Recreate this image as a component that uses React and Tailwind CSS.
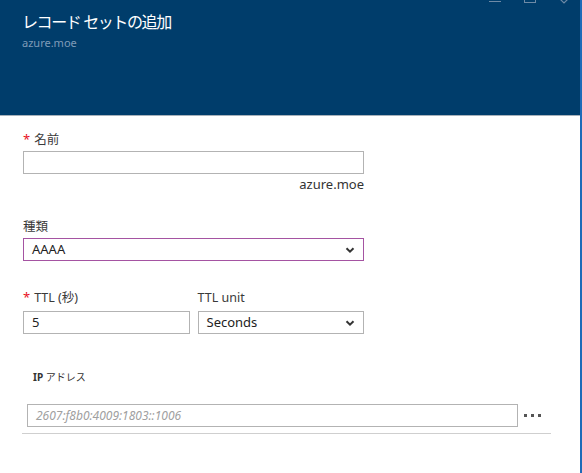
import React from 'react';

const font = {fontFamily: '"Noto Sans", "Noto Sans CJK JP", sans-serif'};

const Chevron = () => (
    <svg className="h-[10px] w-[10px]" viewBox="0 0 10 10" fill="none" stroke="#333" strokeWidth={2}>
        <path d="M1.5 3.2 5 6.6 8.5 3.2"/>
    </svg>
);

const Label = ({required, children, gap = 'mb-[3px]'}) => (
    <div className={`flex items-center gap-[4px] text-[12.5px] leading-[16px] text-[#3a3a3a] ${gap}`}>
        {required && <span className="text-[#e81123] text-[13px] -mt-[3px]">*</span>}
        <span>{children}</span>
    </div>
);

const App = () => {
    return (
        <div className="relative w-[582px] h-[473px] overflow-hidden bg-white border-r-2 border-[#1e6bb8]" style={font}>
            <div className="relative h-[116px] bg-[#003d6b] border-b border-[#a7b1ba] px-[22px] pt-[10px]">
                <div className="text-white text-[16px] leading-[24px] tracking-[-1.4px]">レコード セットの追加</div>
                <div className="text-[#7f9bb8] text-[11px] leading-[14px] mt-[2px]">azure.moe</div>
                {/* window buttons, cut off at top */}
                <div className="absolute top-[1px] left-[489px] w-[12px] h-[1px] bg-[#6e8aa6]"/>
                <div className="absolute -top-[8px] left-[524px] w-[12px] h-[11px] border border-[#6e8aa6]"/>
                <svg className="absolute -top-[2px] left-[558px] h-[10px] w-[12px]" viewBox="0 0 12 10" fill="none" stroke="#6e8aa6" strokeWidth={1.2}>
                    <path d="M1 0 6 5 11 0"/>
                </svg>
            </div>

            <div className="pl-[23px] pr-[216px] pt-[16px]">
                <Label required>名前</Label>
                <div className="h-[23px] border border-[#b3b3b3] bg-white"/>
                <div className="text-right text-[13px] leading-[18px] text-[#333] mt-[1px]">azure.moe</div>

                <div className="mt-[26px]">
                    <Label>種類</Label>
                    <div className="h-[23px] border border-[#a553a2] flex items-center justify-between pl-[8px] pr-[8px] text-[13px] text-[#222]">
                        <span>AAAA</span>
                        <Chevron/>
                    </div>
                </div>

                <div className="mt-[29px] grid grid-cols-2 gap-[8px]">
                    <div>
                        <Label required gap="mb-[5px]">TTL (秒)</Label>
                        <div className="h-[23px] border border-[#b3b3b3] flex items-center pl-[8px] text-[13px] text-[#222]">5</div>
                    </div>
                    <div>
                        <Label gap="mb-[5px]">TTL unit</Label>
                        <div className="h-[23px] border border-[#b3b3b3] flex items-center justify-between pl-[8px] pr-[8px] text-[13px] text-[#222]">
                            <span>Seconds</span>
                            <Chevron/>
                        </div>
                    </div>
                </div>
            </div>

            <div className="pl-[22px] pr-[30px] mt-[36px]">
                <div className="pl-[11px] text-[10px] leading-[14px] text-[#333]">
                    <span className="font-bold">IP</span> アドレス
                </div>
                <div className="mt-[20px] pl-[5px] flex items-center">
                    <div className="w-[491px] h-[23px] border border-[#b3b3b3] flex items-center pl-[8px] text-[12px] italic text-[#a0a0a0]">
                        2607:f8b0:4009:1803::1006
                    </div>
                    <div className="ml-[6px] flex gap-[4px]">
                        <span className="w-[3px] h-[3px] bg-[#555]"/>
                        <span className="w-[3px] h-[3px] bg-[#555]"/>
                        <span className="w-[3px] h-[3px] bg-[#555]"/>
                    </div>
                </div>
                <div className="mt-[6px] h-[1px] w-[529px] bg-[#cfcfcf]"/>
            </div>
        </div>
    );
};

export default App;
